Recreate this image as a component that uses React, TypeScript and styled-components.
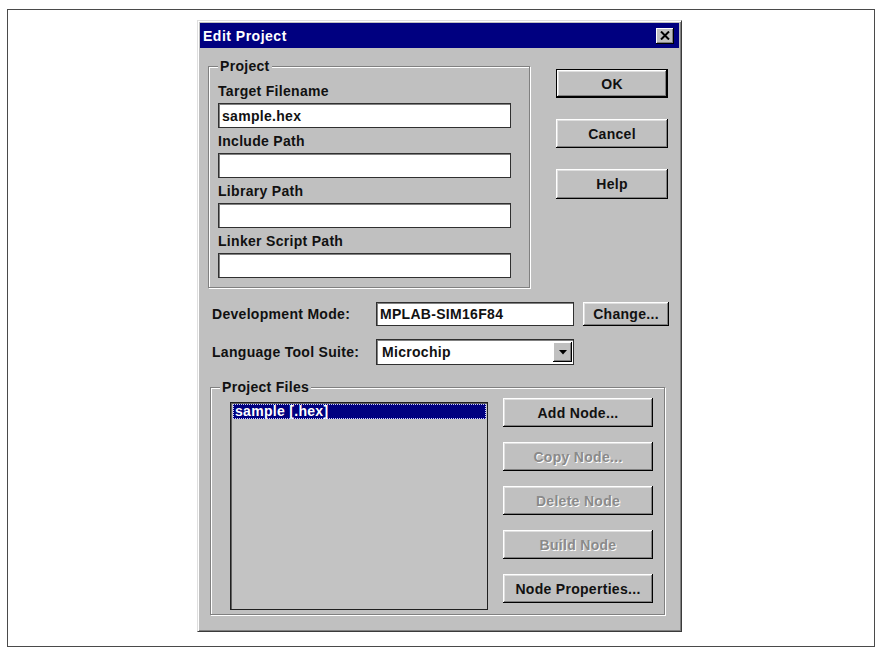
import styled, { createGlobalStyle } from 'styled-components'

const Global = createGlobalStyle`
  body {
    margin: 0;
    background: #fff;
    font-family: "Liberation Sans", Arial, sans-serif;
  }
  * { box-sizing: border-box; }
`

const Frame = styled.div`
  margin: 9px 0 0 7px;
  width: 868px;
  height: 638px;
  border: 1px solid #4a4a4a;
  padding: 10px 0 0 189px;
`

const Dialog = styled.div`
  width: 485px;
  height: 612px;
  background: #c0c0c0;
  border: 1px solid;
  border-color: #dfdfdf #3a3a3a #3a3a3a #dfdfdf;
  box-shadow: inset 1px 1px #fff, inset -1px -1px #808080;
  padding: 2px;
  display: flex;
  flex-direction: column;
  font-size: 14px;
  font-weight: 700;
  letter-spacing: 0.3px;
  color: #111;
`

const TitleBar = styled.div`
  height: 25px;
  background: #000080;
  display: flex;
  align-items: center;
  justify-content: space-between;
  padding: 0 5px 0 3px;
  color: #fff;
`

const Title = styled.span`
  font-size: 14px;
  letter-spacing: 0.5px;
`

const CloseBtn = styled.div`
  width: 18px;
  height: 16px;
  background: #c0c0c0;
  box-shadow: inset -1px -1px #000, inset 1px 1px #fff, inset -2px -2px #808080;
  display: flex;
  align-items: center;
  justify-content: center;
`

const Body = styled.div`
  padding: 18px 10px 0 8px;
  display: flex;
  flex-direction: column;
`

const TopRow = styled.div`
  display: flex;
  align-items: flex-start;
`

const GroupBox = styled.div<{ $w: number; $h?: number }>`
  position: relative;
  width: ${({ $w }) => $w}px;
  ${({ $h }) => ($h ? `height: ${$h}px;` : '')}
  border: 1px solid #808080;
  box-shadow: inset 1px 1px #fff, 1px 1px #fff;
`

const GroupTitle = styled.span`
  position: absolute;
  top: -9px;
  left: 9px;
  padding: 0 2px;
  line-height: 16px;
  background: #c0c0c0;
`

const ProjectInner = styled.div`
  padding: 16px 0 9px 9px;
  display: flex;
  flex-direction: column;
  gap: 5px;
`

const Field = styled.div`
  display: flex;
  flex-direction: column;
  gap: 4px;
`

const FieldLabel = styled.div`
  line-height: 16px;
`

const TextBox = styled.div<{ $w: number; $h?: number }>`
  width: ${({ $w }) => $w}px;
  height: ${({ $h }) => $h ?? 25}px;
  background: #fff;
  border: 1px solid #303030;
  box-shadow: inset 1px 1px #808080;
  display: flex;
  align-items: center;
  padding-left: 3px;
  font-size: 14px;
`

const SideButtons = styled.div`
  margin: 3px 0 0 26px;
  display: flex;
  flex-direction: column;
  gap: 21px;
`

const Button = styled.div<{ $w: number; $h?: number; $default?: boolean; $disabled?: boolean }>`
  width: ${({ $w }) => $w}px;
  height: ${({ $h }) => $h ?? 29}px;
  background: #c0c0c0;
  border: ${({ $default }) => ($default ? '1px solid #000' : 'none')};
  box-shadow: inset -1px -1px #000, inset 1px 1px #fff, inset -2px -2px #808080, inset 2px 2px #dfdfdf;
  display: flex;
  align-items: center;
  justify-content: center;
  color: ${({ $disabled }) => ($disabled ? '#8a8a8a' : '#111')};
  text-shadow: ${({ $disabled }) => ($disabled ? '1px 1px #fff' : 'none')};
`

const ChangeButton = styled(Button)`
  margin-left: 9px;
`

const FormRow = styled.div<{ $mt: number }>`
  display: flex;
  align-items: center;
  margin: ${({ $mt }) => $mt}px 0 0 4px;
`

const RowLabel = styled.div`
  width: 164px;
`

const Select = styled.div`
  width: 198px;
  height: 26px;
  background: #fff;
  border: 1px solid #303030;
  box-shadow: inset 1px 1px #808080;
  display: flex;
  align-items: center;
  justify-content: space-between;
  padding: 2px 1px 2px 5px;
`

const DropArrow = styled.div`
  width: 19px;
  height: 100%;
  background: #c0c0c0;
  box-shadow: inset -1px -1px #000, inset 1px 1px #fff, inset -2px -2px #808080;
  display: flex;
  align-items: center;
  justify-content: center;
`

const FilesGroup = styled(GroupBox)`
  margin: 22px 0 0 2px;
`

const FilesInner = styled.div`
  display: flex;
  align-items: flex-start;
  padding: 14px 0 0 19px;
`

const ListBox = styled.div`
  width: 258px;
  height: 208px;
  background: #c3c3c3;
  border: 1px solid #202020;
  box-shadow: inset 1px 1px #606060;
  padding: 1px 1px 0 2px;
`

const ListItem = styled.div<{ $selected?: boolean }>`
  height: 15px;
  line-height: 15px;
  padding-left: 2px;
  background: ${({ $selected }) => ($selected ? '#000080' : 'transparent')};
  color: ${({ $selected }) => ($selected ? '#fff' : '#111')};
  outline: ${({ $selected }) => ($selected ? '1px dotted #d0d0ff' : 'none')};
  outline-offset: -1px;
`

const NodeButtons = styled.div`
  margin: -4px 0 0 15px;
  display: flex;
  flex-direction: column;
  gap: 15px;
`

const paths = ['Target Filename', 'Include Path', 'Library Path', 'Linker Script Path']

export default function App() {
  return (
    <>
      <Global />
      <Frame>
        <Dialog>
          <TitleBar>
            <Title>Edit Project</Title>
            <CloseBtn>
              <svg width="10" height="9" viewBox="0 0 10 9">
                <path d="M1 0.5 L9 8.5 M9 0.5 L1 8.5" stroke="#000" strokeWidth="2" />
              </svg>
            </CloseBtn>
          </TitleBar>
          <Body>
            <TopRow>
              <GroupBox $w={322}>
                <GroupTitle>Project</GroupTitle>
                <ProjectInner>
                  {paths.map((p, i) => (
                    <Field key={p}>
                      <FieldLabel>{p}</FieldLabel>
                      <TextBox $w={293}>{i === 0 ? 'sample.hex' : ''}</TextBox>
                    </Field>
                  ))}
                </ProjectInner>
              </GroupBox>
              <SideButtons>
                <Button $w={112} $default>OK</Button>
                <Button $w={112}>Cancel</Button>
                <Button $w={112} $h={30}>Help</Button>
              </SideButtons>
            </TopRow>

            <FormRow $mt={14}>
              <RowLabel>Development Mode:</RowLabel>
              <TextBox $w={198} $h={24}>MPLAB-SIM16F84</TextBox>
              <ChangeButton $w={86} $h={24}>Change...</ChangeButton>
            </FormRow>

            <FormRow $mt={13}>
              <RowLabel>Language Tool Suite:</RowLabel>
              <Select>
                <span>Microchip</span>
                <DropArrow>
                  <svg width="8" height="5" viewBox="0 0 8 5">
                    <path d="M0 0 H8 L4 4.5 Z" fill="#000" />
                  </svg>
                </DropArrow>
              </Select>
            </FormRow>

            <FilesGroup $w={455} $h={228}>
              <GroupTitle>Project Files</GroupTitle>
              <FilesInner>
                <ListBox>
                  <ListItem $selected>sample [.hex]</ListItem>
                </ListBox>
                <NodeButtons>
                  <Button $w={150}>Add Node...</Button>
                  <Button $w={150} $disabled>Copy Node...</Button>
                  <Button $w={150} $disabled>Delete Node</Button>
                  <Button $w={150} $disabled>Build Node</Button>
                  <Button $w={150}>Node Properties...</Button>
                </NodeButtons>
              </FilesInner>
            </FilesGroup>
          </Body>
        </Dialog>
      </Frame>
    </>
  )
}
